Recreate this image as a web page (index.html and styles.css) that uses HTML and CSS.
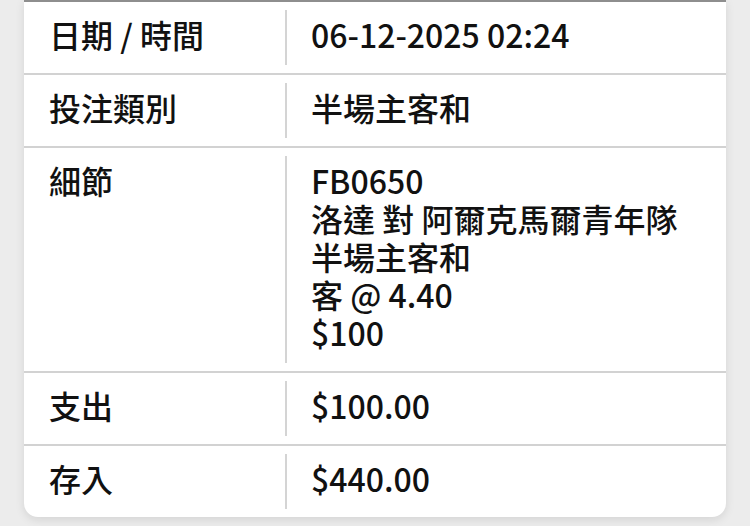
FILE: index.html
```html
<!DOCTYPE html>
<html lang="zh-Hant">
<head>
<meta charset="utf-8">
<link rel="stylesheet" href="styles.css">
</head>
<body>
<div class="card">
  <div class="row">
    <div class="label">日期 / 時間</div>
    <div class="value">06-12-2025 02:24</div>
  </div>
  <div class="row">
    <div class="label">投注類別</div>
    <div class="value">半場主客和</div>
  </div>
  <div class="row">
    <div class="label">細節</div>
    <div class="value">FB0650<br>洛達 對 阿爾克馬爾青年隊<br>半場主客和<br>客 @ 4.40<br>$100</div>
  </div>
  <div class="row">
    <div class="label">支出</div>
    <div class="value">$100.00</div>
  </div>
  <div class="row">
    <div class="label">存入</div>
    <div class="value">$440.00</div>
  </div>
</div>
</body>
</html>
```
FILE: styles.css
```css
html, body {
  margin: 0;
  padding: 0;
  background: #ececec;
  height: 100%;
  overflow: hidden;
}
body {
  font-family: "Noto Sans CJK TC", "Noto Sans", sans-serif;
  color: #111;
}
.card {
  margin-left: 24px;
  width: 702px;
  background: #fff;
  border-top: 2px solid #8e8e8e;
  border-radius: 0 0 14px 14px;
  box-shadow: 0 3px 10px rgba(0, 0, 0, 0.10);
}
.row {
  display: grid;
  grid-template-columns: 261px 1fr;
  padding: 8px 0;
  border-bottom: 2px solid #d2d2d2;
}
.row:last-child {
  border-bottom: none;
}
.label, .value {
  font-size: 32px;
  font-weight: 500;
  line-height: 38px;
  padding: 4.5px 0 12.5px;
}
.label {
  padding-left: 25px;
}
.value {
  border-left: 2px solid #d4d4d4;
  padding-left: 24px;
}
```
